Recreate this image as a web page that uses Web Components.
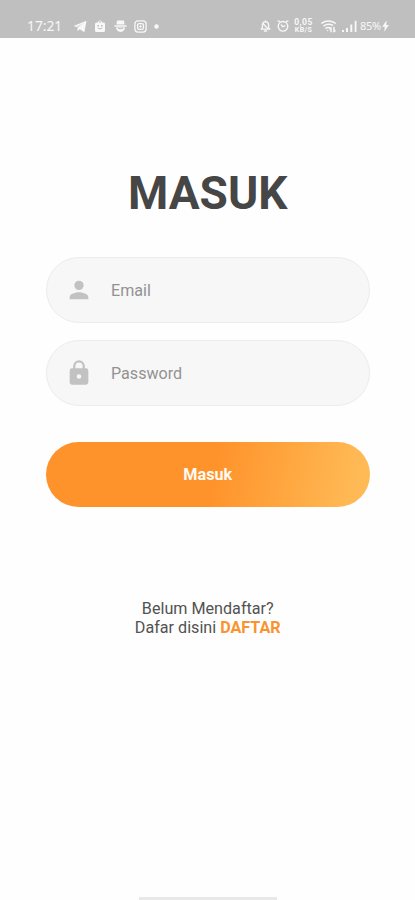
<!DOCTYPE html>
<html lang="id">
<head>
<meta charset="utf-8">
<meta name="viewport" content="width=device-width">
<title>Masuk</title>
<style>
html,body{margin:0;height:100%;overflow:hidden;background:#fefefe}
body{font-family:Roboto,"Liberation Sans",sans-serif;color:#484848}
</style>
</head>
<body>
<login-screen></login-screen>
<script>
const define = (name, html) => customElements.define(name, class extends HTMLElement {
  constructor() {
    super();
    this.attachShadow({ mode: 'open' }).innerHTML = html;
  }
});

define('status-bar', `
<style>
:host{display:flex;align-items:center;justify-content:space-between;box-sizing:border-box;height:37.5px;padding:15px 26px 0 27px;background:#bfbfbf;color:#f8f8f8;font-family:"Noto Sans",sans-serif}
.side{display:flex;align-items:center;height:22px}
svg{display:block;flex:none;fill:currentColor;overflow:visible}
.line{fill:none;stroke:currentColor;stroke-width:1.3;stroke-linecap:round;stroke-linejoin:round}
.time{font-size:13.8px;line-height:22px;width:36px;letter-spacing:0;margin-right:10px}
.left svg{margin-right:7px}
.rate{display:flex;flex-direction:column;align-items:center;width:20px;font:700 8.5px/8px Roboto,sans-serif;letter-spacing:.5px;margin:0 7px 0 5px}
.rate span+span{font-size:7px;line-height:8px;letter-spacing:.4px}
.pct{font-size:11px;line-height:22px;letter-spacing:-.3px;width:22px;margin-left:3px}
</style>
<div class="side left">
  <span class="time">17:21</span>
  <svg width="14" height="13" viewBox="0 0 14 13"><path d="M.5 6 13.5.7 11.4 12.2 6.7 9.2 4.7 11.3 4.4 7.6 10.7 3 3.6 7.1Z"/></svg>
  <svg width="12" height="13" viewBox="0 0 12 13"><path fill-rule="evenodd" d="M2.6 2.6 4 2.5Q4.2.5 6 .5T8 2.5L9.5 2.6Q11 2.6 11 4V10.5Q11 12 9.5 12H2.5Q1 12 1 10.5V4Q1 2.7 2.6 2.6ZM4.8 2.5H7.2Q7 1.3 6 1.3T4.8 2.5ZM3.4 5V6.5H5V5ZM7 5V6.5H8.6V5ZM3.5 8Q6 10.5 8.5 8L8 7.5Q6 9 4 7.5Z"/></svg>
  <svg width="13" height="13" viewBox="0 0 13 13" style="margin-left:1px"><path d="M3 .5H10L10.5 4.5H2.5ZM.5 5.2H12.5V6.7H.5ZM2 7.6H11Q10.5 11.7 6.5 12 2.5 11.7 2 7.6Z"/><path d="M4 8.6H9" stroke="#bfbfbf"/></svg>
  <svg class="line" width="13" height="13" viewBox="0 0 13 13"><rect x=".9" y=".9" width="11.2" height="11.2" rx="3"/><rect x="3.6" y="3.6" width="5.8" height="5.8" rx="1.6"/><path d="M5.4 6.5H7.5M6.5 5.4V7.6" stroke-width=".8"/></svg>
  <svg width="5" height="5" viewBox="0 0 5 5"><circle cx="2.5" cy="2.5" r="2.2"/></svg>
</div>
<div class="side">
  <svg class="line" width="11" height="12" viewBox="0 0 11 12"><path d="M1.2 9.2H9.8L8.6 7.5V4.8Q8.4 2 5.5 1.7 2.6 2 2.4 4.8V7.5ZM4.4 11H6.6M5.5.8V1.6M3.6 4.2 7.6 8.4"/></svg>
  <svg class="line" width="12" height="12" viewBox="0 0 12 12" style="margin-left:6px"><circle cx="6" cy="6.3" r="4.8"/><path d="M1 .9 2.5 1.3M11 .9 9.5 1.3M4.3 5 6 6.8 8 5.7"/></svg>
  <div class="rate"><span>0,05</span><span>KB/S</span></div>
  <svg class="line" width="15" height="13" viewBox="0 0 15 13" style="stroke-width:1.5"><path d="M.8 3.2Q7.4-1 14.2 3.2M2.8 5.8Q7.2 3 11.6 5.2M4.8 8.2Q6.6 7 8.3 7.8M6.6 10.5V10.6M10 7.7V11.8M10 7.7 8.9 8.9M13 11.8V7.5M13 11.8 14 10.7"/></svg>
  <svg width="15" height="13" viewBox="0 0 15 13" style="margin-left:6.5px"><path d="M0 10H2V12H0ZM4 8H6V12H4ZM8.3 4.5H10.3V12H8.3ZM12.7.8H14.5V12H12.7Z"/></svg>
  <span class="pct">85%</span>
  <svg width="7" height="12" viewBox="0 0 7 12"><path d="M4.6.2.2 6.8H2.8L2.2 11.8 6.9 4.9H4.2Z"/></svg>
</div>`);

define('text-field', `
<style>
:host{display:flex;align-items:center;box-sizing:border-box;height:66px;padding:1px 18px 0;border:1px solid #ececec;border-radius:33px;background:#f7f7f7;color:#929292;font-size:16.1px;line-height:20px}
.icon{display:flex;flex:none;width:28px;height:28px;margin:0 18px 2px 0;color:#c2c2c2}
</style>
<span class="icon"><slot name="icon"></slot></span><slot></slot>`);

define('gradient-button', `
<style>
:host{display:block}
button{display:block;width:100%;height:65px;border:0;border-radius:33px;padding:0;background:linear-gradient(100deg,#ff932b 0%,#ff932b 52%,#ffba55 95%);color:#fffaf4;font:700 16.2px/65px Roboto,sans-serif;text-align:center}
</style>
<button type="button"><slot></slot></button>`);

define('home-indicator', `
<style>:host{display:block;width:138px;height:3px;margin:auto auto 0;background:#e8e8e8}</style>`);

define('login-screen', `
<style>
:host{display:flex;flex-direction:column;height:100vh}
main{display:flex;flex-direction:column;padding:0 45.5px 0 46px}
h1{margin:127px 0 0;height:57px;font-size:46px;line-height:56px;font-weight:700;text-align:center;color:#464646}
text-field{margin-top:17px}
.first{margin-top:35.5px}
gradient-button{margin-top:36px}
p{margin:92px 0 0;font-size:16.15px;line-height:19px;text-align:center;color:#525252}
a{font-weight:700;color:#fa932e}
svg{display:block;flex:none;fill:currentColor}
</style>
<status-bar></status-bar>
<main>
  <h1>MASUK</h1>
  <text-field class="first"><svg slot="icon" width="28" height="28" viewBox="0 0 24 24"><path d="M12 12a4 4 0 1 0 0-8 4 4 0 0 0 0 8Zm0 2c-2.67 0-8 1.34-8 4v2h16v-2c0-2.66-5.33-4-8-4Z"/></svg>Email</text-field>
  <text-field><svg slot="icon" width="28" height="28" viewBox="0 0 24 24"><path d="M18 8h-1V6A5 5 0 0 0 7 6v2H6a2 2 0 0 0-2 2v10c0 1.1.9 2 2 2h12a2 2 0 0 0 2-2V10a2 2 0 0 0-2-2Zm-6 9a2 2 0 1 1 0-4 2 2 0 0 1 0 4ZM8.9 8V6a3.1 3.1 0 0 1 6.2 0v2Z"/></svg>Password</text-field>
  <gradient-button>Masuk</gradient-button>
  <p>Belum Mendaftar?<br>Dafar disini <a>DAFTAR</a></p>
</main>
<home-indicator></home-indicator>`);
</script>
</body>
</html>
